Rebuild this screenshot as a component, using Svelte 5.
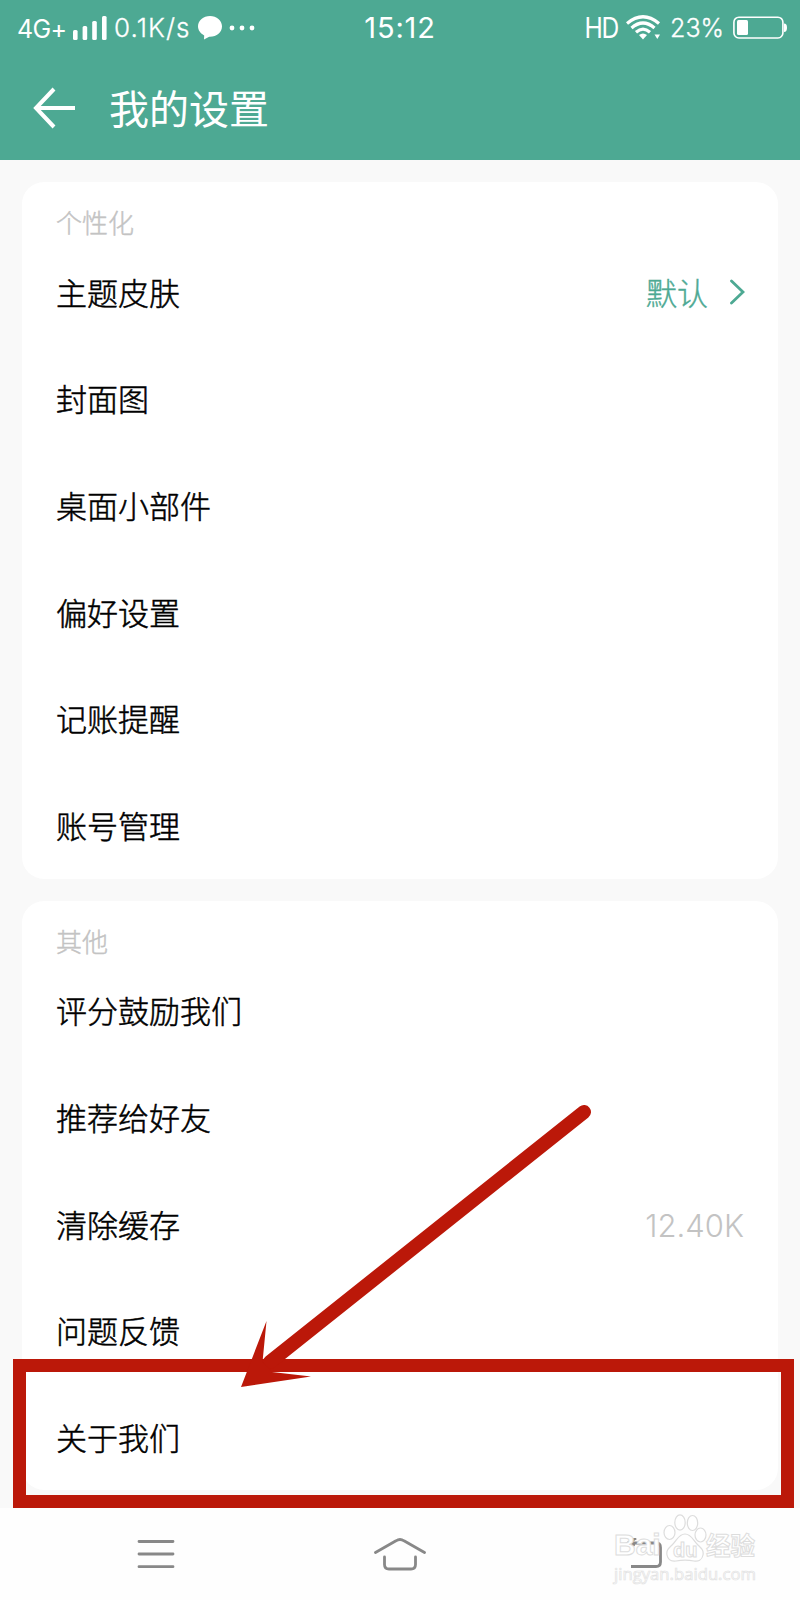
<script>
    const groups = [
        {
            title: '个性化',
            items: [
                {name: '主题皮肤', value: '默认', link: true},
                {name: '封面图'},
                {name: '桌面小部件'},
                {name: '偏好设置'},
                {name: '记账提醒'},
                {name: '账号管理'}
            ]
        },
        {
            title: '其他',
            items: [
                {name: '评分鼓励我们'},
                {name: '推荐给好友'},
                {name: '清除缓存', value: '12.40K'},
                {name: '问题反馈'},
                {name: '关于我们'}
            ]
        }
    ];
</script>

<div class="screen">
    <header>
        <div class="status-bar">
            <div class="status-left">
                <span class="network">4G+</span>
                <svg class="signal" width="34" height="24" viewBox="0 0 34 24" fill="#fff">
                    <rect x="0" y="14" width="4.6" height="10" rx="1.5" />
                    <rect x="9.6" y="10" width="4.6" height="14" rx="1.5" />
                    <rect x="19.2" y="5" width="4.6" height="19" rx="1.5" />
                    <rect x="29" y="0" width="4.6" height="24" rx="1.5" />
                </svg>
                <span class="speed">0.1K/s</span>
                <svg class="bubble" width="24" height="24" viewBox="0 0 24 24" fill="#fff">
                    <path d="M12 0C5.4 0 0 4.5 0 10.3c0 4 2.5 7.2 6.2 9.1L6 23.4l5.2-2.7C18.5 21 24 16.5 24 10.3 24 4.5 18.6 0 12 0z" />
                </svg>
                <svg class="dots" width="26" height="6" viewBox="0 0 26 6" fill="#fff">
                    <circle cx="3" cy="3" r="2.4" />
                    <circle cx="13" cy="3" r="2.4" />
                    <circle cx="23" cy="3" r="2.4" />
                </svg>
            </div>
            <div class="clock">15:12</div>
            <div class="status-right">
                <span class="hd">HD</span>
                <svg class="wifi" width="35" height="25" viewBox="0 0 35 25" fill="none" stroke="#fff" stroke-width="3.2">
                    <path d="M1 8.5Q17 -5 33 8.5" />
                    <path d="M5.5 13Q17 3 28.5 13" />
                    <path d="M10 17.2Q17 11 24 17.2" />
                    <path d="M13 20Q17 17 21 20L17 24.5z" fill="#fff" stroke="none" />
                    <path d="M28.5 19.5h5.5l-2.7 4.5z" fill="#fff" stroke="none" />
                </svg>
                <span class="percent">23%</span>
                <svg class="battery" width="54" height="24" viewBox="0 0 54 24">
                    <rect x="0.9" y="1.2" width="49" height="20.8" rx="5" fill="none" stroke="#fff" stroke-width="1.6" />
                    <rect x="4" y="4" width="11" height="15" rx="1.5" fill="#fff" />
                    <path d="M51 7.5q3 0 3 4.2t-3 4.2z" fill="#fff" />
                </svg>
            </div>
        </div>
        <div class="title-bar">
            <svg width="44" height="42" viewBox="0 0 44 42" fill="none" stroke="#fff" stroke-width="4">
                <path d="M21 2L3 21l18 19M3 21h39" />
            </svg>
            <h1>我的设置</h1>
        </div>
    </header>

    <main>
        {#each groups as group (group.title)}
            <section>
                <h2>{group.title}</h2>
                {#each group.items as item (item.name)}
                    <div class="row">
                        <span class="name">{item.name}</span>
                        {#if item.value}
                            <span class="value" class:link={item.link}>
                                <span>{item.value}</span>
                                {#if item.link}
                                    <svg width="16" height="26" viewBox="0 0 16 26" fill="none" stroke="#4da993" stroke-width="2.8" stroke-linecap="round">
                                        <path d="M2.5 2L14 13 2.5 24" />
                                    </svg>
                                {/if}
                            </span>
                        {/if}
                    </div>
                {/each}
            </section>
        {/each}
    </main>

    <nav>
        <svg width="38" height="32" viewBox="0 0 38 32" fill="none" stroke="#888" stroke-width="2.8" stroke-linecap="round">
            <path d="M2 3.5h34M2 16h34M2 28.7h34" />
        </svg>
        <svg width="52" height="34" viewBox="0 0 52 34" fill="none" stroke="#888" stroke-width="2.8" stroke-linecap="round">
            <path d="M1.5 15.5L22 3.8q4-2.6 8 0L50.5 15.5M10.5 20v7.5q0 4.5 4.5 4.5h22q4.5 0 4.5-4.5V20" />
        </svg>
        <svg width="38" height="32" viewBox="0 0 38 32" fill="none" stroke="#888" stroke-width="2.8">
            <path d="M6 28.5h25q4.5 0 4.5-4.5V9.500Q35.5 5 31 5H3M11 0L3 5l7 2" />
        </svg>
    </nav>

    <div class="watermark">
        <div class="brand">
            <span class="bai">Bai</span>
            <svg width="44" height="48" viewBox="0 0 44 48" fill="#fff" stroke="#ddd" stroke-width="1.2">
                <ellipse cx="6.5" cy="18.5" rx="5.5" ry="7" />
                <ellipse cx="17" cy="8.5" rx="5.2" ry="7.6" />
                <ellipse cx="29.5" cy="9" rx="5.2" ry="7.5" />
                <ellipse cx="37.5" cy="21" rx="5.5" ry="7" />
                <path d="M22 20c-6 0-8 6-12 10s-7 6-6 11 5 6.5 9 6c5-1 13-1 18 0 4 .7 8-1 9-6s-2-7-6-11-6-10-12-10z" />
            </svg>
            <span class="du">du</span>
            <span class="exp">经验</span>
        </div>
        <div class="site">jingyan.baidu.com</div>
    </div>

    <div class="frame"></div>
    <svg class="arrow" width="370" height="290" viewBox="0 0 370 290">
        <path d="M354 12L40 262" stroke="#bb1809" stroke-width="14" stroke-linecap="round" />
        <path d="M11 287L36.5 221 32.5 262 42 272 81 276.5z" fill="#bb1809" />
    </svg>
</div>

<style>
    :global(body) {
        margin: 0;
    }

    .screen {
        position: relative;
        display: flex;
        flex-direction: column;
        width: 800px;
        height: 1600px;
        overflow: hidden;
        background: #f9f9f9;
        color: #000;
        font-family: "Noto Sans CJK SC", sans-serif;
    }

    header {
        height: 160px;
        background: #4da993;
        color: #fff;
    }

    .status-bar {
        display: grid;
        grid-template-columns: 1fr 100px 1fr;
        height: 55px;
        align-items: center;
        font-family: Inter, sans-serif;
        line-height: 1;
        white-space: nowrap;
    }

    .status-left,
    .status-right {
        display: flex;
        align-items: center;
    }

    .status-left {
        padding-left: 17px;
    }

    .network {
        width: 56px;
        font-size: 25px;
        letter-spacing: -0.7px;
        padding-top: 4px;
    }

    .speed {
        width: 77px;
        margin-left: 7px;
        font-size: 26px;
        font-weight: 300;
        letter-spacing: 1.1px;
        -webkit-text-stroke: 0.3px #fff;
    }

    .bubble {
        margin-left: 7px;
    }

    .dots {
        margin-left: 7px;
    }

    .clock {
        text-align: center;
        font-size: 29px;
        letter-spacing: 0.8px;
    }

    .status-right {
        justify-content: flex-end;
        padding-right: 13px;
        font-size: 26px;
    }

    .hd {
        font-size: 28px;
        letter-spacing: -1.5px;
        transform: scaleX(0.88);
        transform-origin: right;
    }

    .percent {
        margin: 0 9px 0 10px;
        font-size: 25px;
        font-weight: 300;
        padding-top: 1px;
        -webkit-text-stroke: 0.3px #fff;
    }

    .wifi {
        margin-left: 8px;
        margin-right: -1px;
    }

    .title-bar {
        display: flex;
        align-items: center;
        height: 105px;
        padding-left: 33px;
    }

    h1 {
        margin: -2px 0 0 32px;
        font-size: 40px;
        font-weight: 400;
    }

    main {
        display: flex;
        flex-direction: column;
        gap: 22px;
        height: 1325.5px;
        padding: 22px 22px 0;
    }

    section {
        border-radius: 22px;
        background: #fff;
        padding: 0 34px;
        height: 696.5px;
    }

    section:last-child {
        height: 589px;
    }

    h2 {
        margin: 0;
        padding-top: 21px;
        height: 37px;
        line-height: 38px;
        font-size: 26px;
        font-weight: 300;
        color: #c3c3c3;
        -webkit-text-stroke: 0.4px #c3c3c3;
    }

    .row {
        display: flex;
        justify-content: space-between;
        align-items: center;
        height: 106.65px;
        font-size: 31px;
        font-weight: 300;
    }

    .name {
        padding-bottom: 4px;
        -webkit-text-stroke: 0.5px #000;
    }

    .value {
        display: flex;
        align-items: center;
        gap: 21px;
        color: #c3c3c3;
        font-family: Inter, "Noto Sans CJK SC", sans-serif;
    }

    .link {
        margin-right: -1px;
        padding-bottom: 2px;
        color: #4da993;
    }

    .link span {
        padding-bottom: 2px;
        -webkit-text-stroke: 0.4px #4da993;
    }

    nav {
        display: flex;
        flex: 1;
        align-items: center;
        justify-content: space-between;
        padding: 0 137px;
        background: #fefefe;
    }

    .watermark {
        position: absolute;
        left: 614px;
        top: 1512px;
        color: #fff;
        font-family: "Liberation Sans", "Noto Sans CJK SC", sans-serif;
        -webkit-text-stroke: 1px #ddd;
        white-space: nowrap;
    }

    .brand {
        display: flex;
        height: 50px;
        align-items: flex-end;
        line-height: 30px;
        font-weight: 700;
    }

    .bai {
        width: 49px;
        font-size: 30px;
        line-height: 34px;
    }

    .du {
        width: 26px;
        margin-left: -34px;
        font-size: 20px;
        line-height: 24px;
    }

    .exp {
        margin-left: 7px;
        font-size: 24.5px;
    }

    .site {
        font-family: "Open Sans", sans-serif;
        font-size: 16.7px;
        line-height: 23px;
        -webkit-text-stroke: 0.7px #e2e2e2;
    }

    .frame {
        position: absolute;
        left: 13px;
        top: 1359px;
        width: 755px;
        height: 122.5px;
        border: 13px solid #bb1809;
    }

    .arrow {
        position: absolute;
        left: 230px;
        top: 1100px;
    }
</style>
